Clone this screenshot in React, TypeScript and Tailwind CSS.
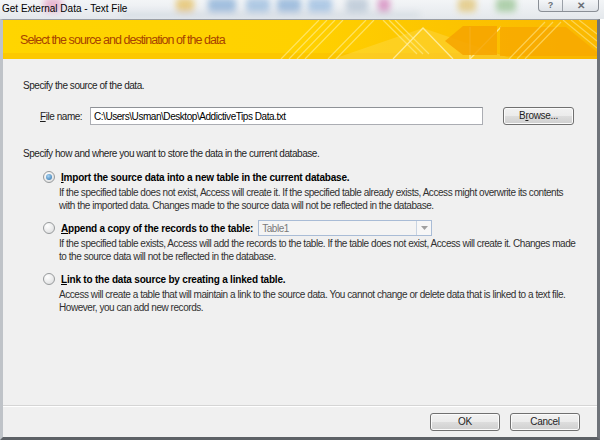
import React from 'react';

const font = "font-['Liberation_Sans',Arial,sans-serif]";
const btn =
  'h-[18px] rounded-[3px] border border-[#707070] bg-[linear-gradient(to_bottom,#f2f2f2_0%,#ebebeb_50%,#dddddd_51%,#cfcfcf_100%)] shadow-[inset_0_0_0_1px_#fbfbfb] text-[10px] tracking-[-0.3px] leading-none text-[#1e1e1e] flex items-center justify-center';

function TitleBlur() {
  const blobs = [
    { x: 44, w: 18, c: '#e7a9c9' },
    { x: 176, w: 18, c: '#e6c36a' },
    { x: 208, w: 28, c: '#8fb3d9' },
    { x: 246, w: 24, c: '#9fbfe0' },
    { x: 277, w: 24, c: '#8fb3d9' },
    { x: 308, w: 24, c: '#9fc0e2' },
    { x: 346, w: 22, c: '#b9c7d6' },
    { x: 378, w: 12, c: '#d78bc0' },
    { x: 458, w: 18, c: '#e3c77a' },
    { x: 496, w: 20, c: '#9fc79a' },
  ];
  return (
    <svg width="604" height="19" className="block">
      <defs>
        <filter id="bl" x="-50%" y="-50%" width="200%" height="200%">
          <feGaussianBlur stdDeviation="3" />
        </filter>
        <linearGradient id="tb" x1="0" y1="0" x2="0" y2="1">
          <stop offset="0" stopColor="#f3f5f7" />
          <stop offset="1" stopColor="#e4e8ec" />
        </linearGradient>
      </defs>
      <rect width="604" height="19" fill="url(#tb)" />
      <g filter="url(#bl)" opacity="0.8">
        {blobs.map((b) => (
          <rect key={b.x} x={b.x} y={-2} width={b.w} height={14} rx={3} fill={b.c} />
        ))}
        <rect x="120" y="12" width="300" height="6" fill="#d4dbe3" />
      </g>
    </svg>
  );
}

function Banner() {
  return (
    <svg width="594" height="39" className="absolute inset-0">
      <defs>
        <linearGradient id="bg" x1="0" y1="0" x2="1" y2="0">
          <stop offset="0" stopColor="#ffd500" />
          <stop offset="0.5" stopColor="#ffd100" />
          <stop offset="0.75" stopColor="#fcc400" />
          <stop offset="1" stopColor="#fab800" />
        </linearGradient>
      </defs>
      <rect width="594" height="39" fill="url(#bg)" />
      <rect y="33" width="594" height="6" fill="#f5b400" opacity="0.35" />
      <g stroke="#fff2a0" strokeWidth="1.2" opacity="0.6">
        <line x1="278" y1="39" x2="316" y2="0" />
        <line x1="286" y1="39" x2="324" y2="0" />
        <line x1="294" y1="39" x2="332" y2="0" />
        <line x1="302" y1="39" x2="340" y2="0" />
        <line x1="325" y1="39" x2="363" y2="0" />
        <line x1="333" y1="39" x2="371" y2="0" />
        <line x1="380" y1="0" x2="414" y2="34" />
        <line x1="386" y1="0" x2="420" y2="34" />
        <line x1="392" y1="0" x2="426" y2="34" />
      </g>
      <polygon points="330,39 420,8 510,39" fill="#ffe680" opacity="0.25" />
      <g stroke="#fff0a8" strokeWidth="1.3" opacity="0.85" fill="none">
        <polyline points="390,39 420,8 450,39" />
        <line x1="467" y1="7" x2="467" y2="39" />
        <line x1="467" y1="39" x2="498" y2="7" />
      </g>
      <polygon points="442,21 460,6 494,6 494,35 460,35" fill="#f6a300" opacity="0.85" />
      <polygon points="497,7 563,7 594,32 594,36 497,36" fill="#f7a800" opacity="0.8" />
      <g stroke="#ffe78a" strokeWidth="1.2" opacity="0.6">
        <line x1="506" y1="39" x2="542" y2="2" />
        <line x1="514" y1="39" x2="550" y2="2" />
        <line x1="522" y1="39" x2="558" y2="2" />
        <line x1="560" y1="0" x2="594" y2="28" />
        <line x1="568" y1="0" x2="594" y2="21" />
        <line x1="576" y1="0" x2="594" y2="14" />
      </g>
    </svg>
  );
}

function Radio({ checked }: { checked?: boolean }) {
  return (
    <span className="w-[12px] h-[12px] rounded-full border border-[#979a9c] bg-[radial-gradient(circle_at_35%_30%,#ffffff,#d9dadb)] flex items-center justify-center shrink-0">
      {checked && (
        <span className="w-[6px] h-[6px] rounded-full bg-[radial-gradient(circle_at_40%_35%,#a8d4f5,#2a6fa8)]" />
      )}
    </span>
  );
}

function Option({
  checked,
  label,
  extra,
  lines,
}: {
  checked?: boolean;
  label: React.ReactNode;
  extra?: React.ReactNode;
  lines: string[];
}) {
  return (
    <div className="flex flex-col">
      <div className="flex items-center h-[16px]">
        <span className="w-[38px] flex justify-end">
          <span className="mr-[6px]"><Radio checked={checked} /></span>
        </span>
        <span className="font-bold tracking-[-0.2px] text-black whitespace-nowrap">{label}</span>
        {extra}
      </div>
      <div className="pl-[36px] pt-[1px] text-[#303030]">
        {lines.map((l) => (
          <div key={l} className="whitespace-nowrap h-[13px]">{l}</div>
        ))}
      </div>
    </div>
  );
}

export default function App() {
  return (
    <div className={`w-[604px] h-[444px] bg-white overflow-hidden ${font}`}>
      <div className="relative h-[19px]">
        <TitleBlur />
        <span className="absolute left-[2px] top-[2px] text-[10px] leading-[14px] text-black">Get External Data - Text File</span>
        <div className="absolute left-[538px] top-0 w-[61px] h-[12px] rounded-b-[4px] border border-t-0 border-[#8a8f96] bg-[linear-gradient(to_bottom,#f4f6f8,#dfe3e8)] flex">
          <span className="w-[24px] border-r border-[#9aa0a8] flex items-center justify-center text-[9px] leading-none text-[#6a6f76] font-bold">?</span>
          <span className="flex-1 flex items-center justify-center text-[10px] leading-none text-[#6a6f76] font-bold">✕</span>
        </div>
      </div>
      <div className="w-[600px] h-[421px] flex flex-col border-l-[3px] border-l-[#bfc3c8] border-r-[3px] border-r-[#6f7379] border-b-[3px] border-b-[#5d6166] border-t border-t-[#9a9ea4]">
        <div className="relative h-[39px] shrink-0">
          <Banner />
          <span className="absolute left-[17px] top-[12px] text-[12.5px] tracking-[-0.95px] leading-[16px] text-[#a84300]">Select the source and destination of the data</span>
        </div>
        <div className="flex-1 bg-[#f0f0f0] flex flex-col text-[10px] tracking-[-0.45px] leading-[13px] text-[#1e1e1e]">
          <div className="pl-[20px] pt-[20px] flex flex-col">
            <div>Specify the source of the data.</div>
            <div className="mt-[15px] flex items-center h-[18px]">
              <span className="ml-[17px] w-[50px]"><span className="underline">F</span>ile name:</span>
              <div className="w-[393px] h-[18px] bg-white border border-[#abadb3] border-t-[#8e9196] flex items-center pl-[3px] text-black">
                C:\Users\Usman\Desktop\AddictiveTips Data.txt
              </div>
              <button className={`${btn} ml-[20px] w-[71px]`}>
                B<span className="underline">r</span>owse...
              </button>
            </div>
            <div className="mt-[22px]">Specify how and where you want to store the data in the current database.</div>
            <div className="mt-[9px] flex flex-col gap-[8px]">
              <Option
                checked
                label={<><span className="underline">I</span>mport the source data into a new table in the current database.</>}
                lines={[
                  'If the specified table does not exist, Access will create it. If the specified table already exists, Access might overwrite its contents',
                  'with the imported data. Changes made to the source data will not be reflected in the database.',
                ]}
              />
              <Option
                label={<><span className="underline">A</span>ppend a copy of the records to the table:</>}
                extra={
                  <div className="ml-[5px] w-[174px] h-[16px] border border-[#a9bcd6] bg-[#f4f4f4] flex items-center">
                    <span className="flex-1 pl-[3px] text-[#7a7a7a]">Table1</span>
                    <span className="w-[15px] h-[14px] border-l border-[#c9d4e2] bg-[#f7f7f7] flex items-center justify-center">
                      <svg width="7" height="4" viewBox="0 0 7 4"><path d="M0 0h7L3.5 4z" fill="#a0a0a0" /></svg>
                    </span>
                  </div>
                }
                lines={[
                  'If the specified table exists, Access will add the records to the table. If the table does not exist, Access will create it. Changes made',
                  'to the source data will not be reflected in the database.',
                ]}
              />
              <Option
                label={<><span className="underline">L</span>ink to the data source by creating a linked table.</>}
                lines={[
                  'Access will create a table that will maintain a link to the source data. You cannot change or delete data that is linked to a text file.',
                  'However, you can add new records.',
                ]}
              />
            </div>
          </div>
          <div className="mt-auto border-t border-t-[#d5d5d5] shadow-[inset_0_1px_0_#ffffff] h-[32px] flex items-start justify-end pr-[17px] pt-[7px] gap-[10px]">
            <button className={`${btn} w-[70px]`}>OK</button>
            <button className={`${btn} w-[70px]`}>Cancel</button>
          </div>
        </div>
      </div>
    </div>
  );
}
